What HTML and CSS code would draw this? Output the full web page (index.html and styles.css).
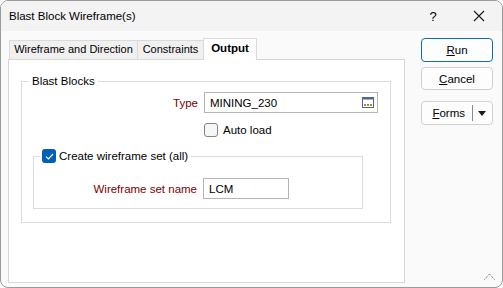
FILE: index.html
```html
<!DOCTYPE html>
<html lang="en">
<head>
  <meta charset="UTF-8" />
  <title>Blast Block Wireframe(s)</title>
  <link rel="stylesheet" href="styles.css">
</head>
<body>

  <div class="window">

    <!-- Title bar -->
    <div class="titlebar">
      <span class="title">Blast Block Wireframe(s)</span>
      <span class="help">?</span>
      <span class="close">
        <svg width="12" height="12" viewBox="0 0 12 12"><path d="M1 1 L11 11 M11 1 L1 11" stroke="#1a1a1a" stroke-width="1.1" fill="none"/></svg>
      </span>
    </div>

    <div class="content">

      <!-- Tabs -->
      <div class="tabs-area">
        <div class="tabstrip">
          <div class="tab tab-1">Wireframe and Direction</div>
          <div class="tab tab-2">Constraints</div>
          <div class="tab tab-3 active">Output</div>
        </div>

        <div class="panel">
          <fieldset class="group outer">
            <legend>Blast Blocks</legend>

            <div class="row">
              <label class="lbl lbl-outer">Type</label>
              <div class="input input-type">
                <span>MINING_230</span>
                <svg class="browse" width="12" height="11" viewBox="0 0 12 11">
                  <rect x="0.5" y="0.5" width="11" height="10" fill="#fff" stroke="#4d6a8c"/>
                  <rect x="0.5" y="0.5" width="11" height="2" fill="#4d6a8c"/>
                  <rect x="2" y="7" width="2" height="2" fill="#b88a2a"/>
                  <rect x="5" y="7" width="2" height="2" fill="#b88a2a"/>
                  <rect x="8" y="7" width="2" height="2" fill="#b88a2a"/>
                </svg>
              </div>
            </div>

            <div class="row check-row">
              <span class="check"></span>
              <span>Auto load</span>
            </div>

            <fieldset class="group inner">
              <legend>
                <span class="check on">
                  <svg width="9" height="7" viewBox="0 0 9 7"><path d="M1 3.6 L3.4 6 L8 1" stroke="#fff" stroke-width="1.2" fill="none"/></svg>
                </span>
                <span>Create wireframe set (all)</span>
              </legend>

              <div class="row">
                <label class="lbl lbl-inner">Wireframe set name</label>
                <div class="input input-name">LCM</div>
              </div>
            </fieldset>
          </fieldset>
        </div>
      </div>

      <!-- Side buttons -->
      <div class="side">
        <button class="btn btn-run"><u>R</u>un</button>
        <button class="btn btn-cancel"><u>C</u>ancel</button>
        <div class="btn btn-forms">
          <span class="forms-text"><u>F</u>orms</span>
          <span class="forms-sep"></span>
          <svg width="8" height="5" viewBox="0 0 8 5"><path d="M0 0 L8 0 L4 5 Z" fill="#1a1a1a"/></svg>
        </div>
      </div>
    </div>

    <svg class="grip" width="11" height="7" viewBox="0 0 11 7">
      <path d="M0.5 6.5 L5.5 1 L10.5 6.5" stroke="#555" stroke-width="1" stroke-dasharray="1 1" fill="none"/>
    </svg>
  </div>

</body>
</html>
```

FILE: styles.css
```css
body {
  margin: 0;
  font-family: 'Segoe UI', 'Liberation Sans', Arial, sans-serif;
  font-size: 11.5px;
  color: #000;
  background: #fff;
}

.window {
  position: relative;
  box-sizing: border-box;
  width: 503px;
  height: 288px;
  border: 1px solid #9a9a9a;
  border-radius: 8px;
  background: #fafafa;
  overflow: hidden;
}

/* Title bar */
.titlebar {
  height: 30px;
  display: flex;
  align-items: center;
  background: #f3f3f3;
}

.title {
  margin-left: 8px;
  font-size: 11.5px;
  flex: 1;
}

.help {
  width: 46px;
  text-align: center;
  font-size: 13px;
}

.close {
  width: 46px;
  display: flex;
  justify-content: center;
}

/* Content */
.content {
  display: flex;
  padding: 7px 0 0 7px;
  gap: 16px;
}

.tabs-area {
  width: 397px;
}

.tabstrip {
  display: flex;
  align-items: flex-end;
  height: 21px;
  padding-left: 1px;
}

.tab {
  box-sizing: border-box;
  height: 19px;
  line-height: 17px;
  border: 1px solid #dadada;
  border-bottom: none;
  border-right: none;
  background: #f0f0f0;
  text-align: center;
  white-space: nowrap;
  font-size: 11px;
}

.tab-1 { width: 128px; }
.tab-2 { width: 66px; }

.tab.active {
  width: 54px;
  height: 22px;
  line-height: 19px;
  margin-bottom: -1px;
  background: #fff;
  font-weight: bold;
  font-size: 11.5px;
  border-right: 1px solid #dadada;
  position: relative;
  z-index: 1;
}

.panel {
  box-sizing: border-box;
  height: 224px;
  border: 1px solid #d6d6d6;
  background: #fff;
  padding: 13px 0 0 12px;
}

/* Group boxes */
.group {
  margin: 0;
  padding: 0;
  border: 1px solid #dcdcdc;
  min-width: 0;
}

.group legend {
  padding: 0 3px;
  margin-left: 7px;
  line-height: 16px;
}

.outer {
  width: 370px;
  box-sizing: border-box;
  padding: 3px 0 13px 0;
}

.inner {
  width: 330px;
  box-sizing: border-box;
  margin: 11px 0 0 11px;
  padding: 14px 0 9px 0;
}

.inner legend {
  display: flex;
  align-items: center;
  gap: 3px;
  margin-left: 6px;
  padding: 0 3px 0 2px;
}

/* Rows */
.row {
  display: flex;
  align-items: center;
  gap: 6px;
}

.lbl {
  text-align: right;
  color: #800000;
}

.lbl-outer { width: 176px; }
.lbl-inner { width: 163px; }

.input {
  box-sizing: border-box;
  height: 21px;
  border: 1px solid #b4b4b4;
  background: #fff;
  display: flex;
  align-items: center;
  padding: 0 5px;
}

.input-type {
  width: 174px;
  justify-content: space-between;
  padding-right: 3px;
}

.input-name {
  width: 86px;
}

.check-row {
  margin-top: 10px;
  padding-left: 182px;
  gap: 5px;
  height: 14px;
}

.check {
  box-sizing: border-box;
  width: 14px;
  height: 14px;
  border: 1px solid #858585;
  border-radius: 3px;
  background: #f6f6f6;
  display: flex;
  align-items: center;
  justify-content: center;
}

.check.on {
  border: none;
  background: #005fb8;
}

/* Side buttons */
.side {
  width: 72px;
  display: flex;
  flex-direction: column;
}

.btn {
  box-sizing: border-box;
  width: 72px;
  height: 23px;
  border: 1px solid #d0d0d0;
  border-radius: 4px;
  background: #fdfdfd;
  font-family: inherit;
  font-size: 11.5px;
  color: #000;
  padding: 0;
}

.btn-run {
  height: 24px;
  border-color: #0f6cbd;
}

.btn-cancel {
  margin-top: 5px;
}

.btn-forms {
  margin-top: 11px;
  height: 24px;
  display: flex;
  align-items: center;
  justify-content: flex-end;
  padding-right: 6px;
}

.forms-sep {
  width: 1px;
  height: 16px;
  background: #8a8a8a;
  margin: 0 5px 0 7px;
}

.grip {
  position: absolute;
  right: 7px;
  bottom: 7px;
}
```
